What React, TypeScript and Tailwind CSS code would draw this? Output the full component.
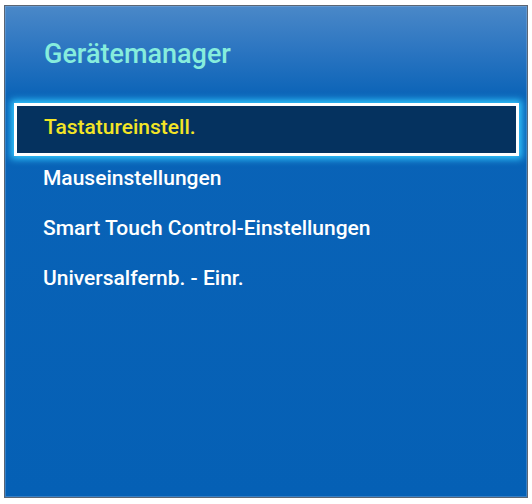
const items = [
  "Mauseinstellungen",
  "Smart Touch Control-Einstellungen",
  "Universalfernb. - Einr.",
];

export default function App() {
  return (
    <div className="min-h-[504px] w-[532px] bg-white pl-[4px] pt-[5px] font-['Roboto','Open_Sans',sans-serif]">
      <div className="h-[493px] w-[524px] border border-[#5b6573] bg-[linear-gradient(180deg,#4a88c8_0px,#2b75c1_45px,#0a63b7_92px,#0560b5_100%)] shadow-[inset_0_0_0_1px_rgba(150,185,225,0.35)]">
        {/* Header */}
        <h1 className="ml-[39px] mt-[32px] text-[27px] font-medium leading-[32px] text-[#86eddd]">
          Gerätemanager
        </h1>

        {/* Menu list */}
        <div className="mt-[33px]">
          <div className="ml-[9px] mr-[8px] h-[53px] border-[3px] border-white bg-[#05325f] pl-[27px] pt-[7px] shadow-[0_0_7px_3px_#33c9ff]">
            <span className="text-[21px] font-medium leading-[28px] text-[#f3e526]">
              Tastatureinstell.
            </span>
          </div>
          {items.map((label) => (
            <div key={label} className="h-[50px] pl-[38px] pt-[8px] text-[21px] font-medium leading-[28px] text-white">
              {label}
            </div>
          ))}
        </div>
      </div>
    </div>
  );
}
